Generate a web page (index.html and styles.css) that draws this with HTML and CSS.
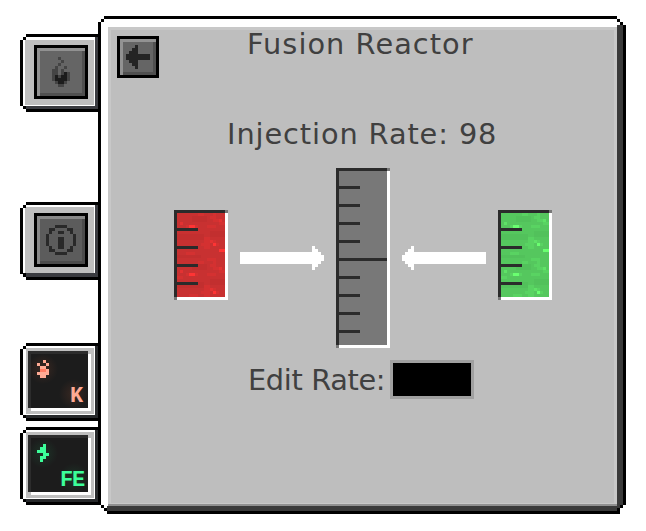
FILE: index.html
```html
<!DOCTYPE html>
<html lang="en">
<head>
<meta charset="utf-8">
<title>Fusion Reactor</title>
<link rel="stylesheet" href="styles.css">
</head>
<body>
<svg class="defs" width="0" height="0" aria-hidden="true">
  <defs>
    <g id="ripples">
      <path opacity=".22" d="M14 0h2v1h-2zM3 1h3v1h-3zM10 3h3v1h-3zM7 4h2v1h-2zM12 4h1v1h-1zM11 5h2v1h-2zM12 6h3v1h-3zM1 7h1v1h-1zM14 7h2v1h-2zM3 8h4v1h-4zM10 8h3v1h-3zM0 9h2v1h-2zM9 12h2v1h-2zM9 13h4v1h-4zM8 14h3v1h-3zM13 14h1v1h-1zM4 15h3v1h-3zM9 15h2v1h-2z"/>
      <path opacity=".35" d="M14 6h1v1h-1zM1 7h1v1h-1zM11 13h1v1h-1z"/>
      <path d="M14 0h2v1h-2zM4 8h2v1h-2zM12 14h1v1h-1z"/>
      <path fill="#000" opacity=".03" d="M0 2h8v1h-8zM5 5h5v2h-5zM0 11h9v2h-9zM11 10h5v2h-5z"/>
    </g>
    <pattern id="red-fluid" width="16" height="16" y="12" patternUnits="userSpaceOnUse">
      <use href="#ripples" fill="#ff3434"/>
    </pattern>
    <pattern id="green-fluid" width="16" height="16" y="12" patternUnits="userSpaceOnUse">
      <use href="#ripples" fill="#6aff70"/>
    </pattern>
  </defs>
</svg>
<div class="screen">
  <nav class="tabs">
    <div class="tab tab-heat">
      <div class="button">
        <svg class="icon" width="18" height="30" viewBox="0 0 6 10">
          <path fill="#444" d="M2 0h1v1h-1zM3 1h1v1h-1zM2 2h1v1h-1zM1 3h1v1h-1zM4 3h1v1h-1zM0 4h2v1h-2zM3 4h1v1h-1zM0 5h6v3h-6zM1 8h4v1h-4zM2 9h2v1h-2z"/>
          <path fill="#1c1c1c" d="M1 6h1v1h1v-1h1v-1h1v3h-1v1h-2v-1h-1z"/>
          <path fill="#666" d="M2 5h1v1h-1z"/>
        </svg>
      </div>
    </div>
    <div class="tab tab-info">
      <div class="button">
        <svg class="icon" width="30" height="30" viewBox="0 0 10 10" fill="#292929">
          <path d="M3 0h4v1h-4zM1 1h2v1h-2zM7 1h2v1h-2zM1 2h1v1h-1zM8 2h1v1h-1zM0 3h1v4h-1zM9 3h1v4h-1zM1 7h1v1h-1zM8 7h1v1h-1zM1 8h2v1h-2zM7 8h2v1h-2zM3 9h4v1h-4zM4 2h2v1h-2zM4 4h2v4h-2z"/>
        </svg>
      </div>
    </div>
    <div class="tab tab-unit tab-kelvin">
      <div class="display">
        <svg class="icon" width="12" height="18" viewBox="0 0 4 6">
          <path fill="#ffaa94" d="M2 0h1v1h-1zM0 1h1v1h-1zM3 1h1v1h-1zM1 2h2v1h-2zM1 3h3v1h-3zM0 4h4v1h-4zM1 5h2v1h-2z"/>
          <path fill="#ff7b62" d="M1 3h2v1h-2z"/>
        </svg>
        <span class="unit">K</span>
      </div>
    </div>
    <div class="tab tab-unit tab-energy">
      <div class="display">
        <svg class="icon" width="12" height="18" viewBox="0 0 4 6">
          <path fill="#3cfe9a" d="M2 0h1v1h-1zM1 1h2v1h-2zM0 2h3v1h-3zM2 3h2v1h-2zM1 4h2v1h-2zM1 5h1v1h-1z"/>
        </svg>
        <span class="unit">FE</span>
      </div>
    </div>
  </nav>

  <main class="panel">
    <div class="face">
      <header class="header">
        <div class="button button-back">
          <svg class="icon" width="24" height="24" viewBox="0 0 8 8" fill="#242424">
            <path d="M0 3h1v-1h1v-1h1v-1h1v3h4v2h-4v3h-1v-1h-1v-1h-1v-1h-1z"/>
          </svg>
        </div>
        <h1 class="label title">Fusion Reactor</h1>
      </header>
      <p class="label rate">Injection Rate: 98</p>
      <div class="flow">
        <svg class="gauge red" width="54" height="90" viewBox="0 0 18 30">
          <path class="hi" d="M1 1h17v29h-17z"/>
          <path class="fluid" d="M1 1h16v28h-16z"/>
          <svg x="1" y="1" width="16" height="28"><path class="specks" d="M0 0h16v28h-16z"/></svg>
          <path class="mark" d="M0 0h17v1h-16v28h-1zM1 6h7v1h-7zM1 12h7v1h-7zM1 18h7v1h-7zM1 24h7v1h-7z"/>
          <path class="nub" d="M17 0h1v1h-1zM0 29h1v1h-1z"/>
        </svg>
        <svg class="arrow" width="84" height="24" viewBox="0 0 28 8"><path d="M0 2h24v-2h1v1h1v1h1v1h1v2h-1v1h-1v1h-1v1h-1v-2h-24z"/></svg>
        <svg class="gauge empty" width="54" height="180" viewBox="0 0 18 60">
          <path class="hi" d="M1 1h17v59h-17z"/>
          <path class="fluid" d="M1 1h16v58h-16z"/>
          <path class="mark" d="M0 0h17v1h-16v58h-1zM1 6h7v1h-7zM1 12h7v1h-7zM1 18h7v1h-7zM1 24h7v1h-7zM1 30h16v1h-16zM1 36h7v1h-7zM1 42h7v1h-7zM1 48h7v1h-7zM1 54h7v1h-7z"/>
          <path class="nub" d="M17 0h1v1h-1zM0 59h1v1h-1z"/>
        </svg>
        <svg class="arrow" width="84" height="24" viewBox="0 0 28 8"><path d="M28 2h-24v-2h-1v1h-1v1h-1v1h-1v2h1v1h1v1h1v1h1v-2h24z"/></svg>
        <svg class="gauge green" width="54" height="90" viewBox="0 0 18 30">
          <path class="hi" d="M1 1h17v29h-17z"/>
          <path class="fluid" d="M1 1h16v28h-16z"/>
          <svg x="1" y="1" width="16" height="28"><path class="specks" d="M0 0h16v28h-16z"/></svg>
          <path class="mark" d="M0 0h17v1h-16v28h-1zM1 6h7v1h-7zM1 12h7v1h-7zM1 18h7v1h-7zM1 24h7v1h-7z"/>
          <path class="nub" d="M17 0h1v1h-1zM0 29h1v1h-1z"/>
        </svg>
      </div>
      <div class="edit">
        <label class="label edit-label" for="rate">Edit Rate:</label>
        <input class="field" id="rate" type="text">
      </div>
    </div>
  </main>
</div>
</body>
</html>
```
FILE: styles.css
```css
* { box-sizing: border-box; }

body {
  margin: 0;
  background: #fff;
  font-family: "DejaVu Sans", sans-serif;
  color: #404040;
}

svg { display: block; shape-rendering: crispEdges; }
.defs { position: absolute; }

.screen {
  width: 646px;
  height: 531px;
  padding: 16px 20px 0;
  display: flex;
  align-items: flex-start;
  overflow: hidden;
}

.tabs {
  width: 78px;
  padding-top: 18px;
  display: flex;
  flex-direction: column;
}

/* Tabs: black stepped outline, light top-left bevel, dark bottom-right bevel */
.tab {
  --corners:
    linear-gradient(#000, #000) 3px 3px / 3px 3px no-repeat,
    linear-gradient(#000, #000) 3px 72px / 3px 3px no-repeat;
  height: 78px;
  clip-path: polygon(6px 0, 78px 0, 78px 100%, 6px 100%, 6px calc(100% - 3px), 3px calc(100% - 3px), 3px calc(100% - 6px), 0 calc(100% - 6px), 0 6px, 3px 6px, 3px 3px, 6px 3px);
}
.tab-heat, .tab-info { padding: 11px 0 0 14px; }
.tab-heat {
  background:
    var(--corners),
    linear-gradient(#bebebe, #bebebe) 5px 6px / 69px 65px no-repeat,
    linear-gradient(#fff, #fff) 3px 3px / 72px 69px no-repeat,
    linear-gradient(#3a3b40, #3a3b40) 6px 3px / 72px 72px no-repeat,
    #000;
}
.tab-info {
  margin-top: 90px;
  background:
    var(--corners),
    linear-gradient(#bebebe, #bebebe) 5px 5px / 69px 66px no-repeat,
    linear-gradient(#fff, #fff) 3px 3px / 72px 68px no-repeat,
    linear-gradient(#3a3b40, #3a3b40) 6px 3px / 72px 72px no-repeat,
    #000;
}
.tab-unit {
  padding: 5px 0 0 6px;
  background:
    var(--corners),
    linear-gradient(#fff, #fff) 3px 3px / 72px 69px no-repeat,
    linear-gradient(#27292b, #27292b) 6px 3px / 72px 72px no-repeat,
    #000;
}
.tab-kelvin { margin-top: 63px; }
.tab-energy { margin-top: 6px; }

.button {
  width: 54px;
  height: 54px;
  display: flex;
  align-items: center;
  justify-content: center;
  background: #656565;
  border: 3px solid #000;
  box-shadow: inset 3px 3px #919191, inset -3px -3px #505050;
}
.tab-info .button { background: #5c5c5c; box-shadow: inset 3px 3px #888, inset -3px -3px #4b4b4b; }
.button-back { width: 42px; height: 42px; box-shadow: inset 3px 3px #929292, inset -3px -3px #505050; }

.display {
  width: 68px;
  height: 66px;
  padding: 12px 10px 0 11px;
  display: flex;
  justify-content: space-between;
  background:
    radial-gradient(circle at 17px 21px, var(--glow), transparent 15px),
    radial-gradient(circle at 48px 46px, var(--glow), transparent 15px),
    linear-gradient(#1c1c1c, #1c1c1c) 5px 6px / 57px 54px no-repeat,
    linear-gradient(#fff, #fff) 5px 6px / 60px 57px no-repeat,
    linear-gradient(#2c2c2c, #2c2c2c) 2px 3px / 60px 57px no-repeat,
    #bebebe;
}
.tab-kelvin .display { --glow: rgba(255, 120, 70, .13); padding-right: 12px; color: #ffaa94; }
.tab-energy .display { --glow: rgba(40, 255, 140, .1); color: #3cfe9a; }
.unit {
  margin-top: 25px;
  font: bold 22px/24px "Liberation Mono", monospace;
  letter-spacing: -1.2px;
}

.panel {
  width: 528px;
  height: 498px;
  padding: 3px;
  background: #000;
  clip-path: polygon(6px 0, 519px 0, 519px 3px, 522px 3px, 522px 6px, 525px 6px, 525px 9px, 528px 9px, 528px 489px, 525px 489px, 525px 492px, 522px 492px, 522px 498px, 9px 498px, 9px 495px, 6px 495px, 6px 492px, 3px 492px, 3px 489px, 0 489px, 0 6px, 3px 6px, 3px 3px, 6px 3px);
}
.face {
  width: 522px;
  height: 492px;
  padding: 17px 0 0 16px;
  background:
    linear-gradient(#bebebe, #bebebe) 10px 11px / 503px 473px no-repeat,
    linear-gradient(#c8c8c8, #c8c8c8) 7px 8px / 509px 477px no-repeat,
    linear-gradient(#909090, #909090) 7px 484px / 509px 3px no-repeat,
    linear-gradient(#3a3a3a, #3a3a3a) 516px 6px / 6px 486px no-repeat,
    linear-gradient(#3a3a3a, #3a3a3a) 6px 487px / 516px 5px no-repeat,
    #fff;
  clip-path: polygon(3px 0, 516px 0, 516px 3px, 519px 3px, 519px 6px, 522px 6px, 522px 486px, 519px 486px, 519px 489px, 516px 489px, 516px 492px, 6px 492px, 6px 489px, 3px 489px, 3px 486px, 0 486px, 0 3px, 3px 3px);
}

.header { display: flex; }
.label {
  margin: 0;
  font-size: 28.8px;
  font-weight: 400;
  line-height: 34px;
  white-space: nowrap;
}
.title { margin: -9px 0 0 88px; letter-spacing: 1.05px; }
.rate { margin: 39px 0 0 110px; letter-spacing: .9px; }
.flow {
  margin: 17px 0 0 57px;
  height: 180px;
  display: flex;
  align-items: center;
  gap: 12px;
}
/* The side gauges share the arrows' row, a little above the centre line */
.gauge.red, .gauge.green { margin-top: -6px; }
.arrow { fill: #fff; }
.hi { fill: #fff; }
.mark { fill: #2b2b2b; }
.nub { fill: #787878; }
.red .fluid { fill: #c83131; }
.red .specks { fill: url(#red-fluid); }
.green .fluid { fill: #55c75e; }
.green .specks { fill: url(#green-fluid); }
.empty .fluid { fill: #787878; }

.edit { margin: 12px 0 0 131px; display: flex; align-items: flex-start; }
.edit-label { width: 138px; margin-top: 3px; letter-spacing: -.35px; }
.field {
  width: 84px;
  height: 39px;
  margin-left: 4px;
  padding: 0 6px;
  background: #000;
  border: 3px solid #a0a0a0;
  border-radius: 0;
  color: #e0e0e0;
  font: 24px "DejaVu Sans", sans-serif;
}
```
